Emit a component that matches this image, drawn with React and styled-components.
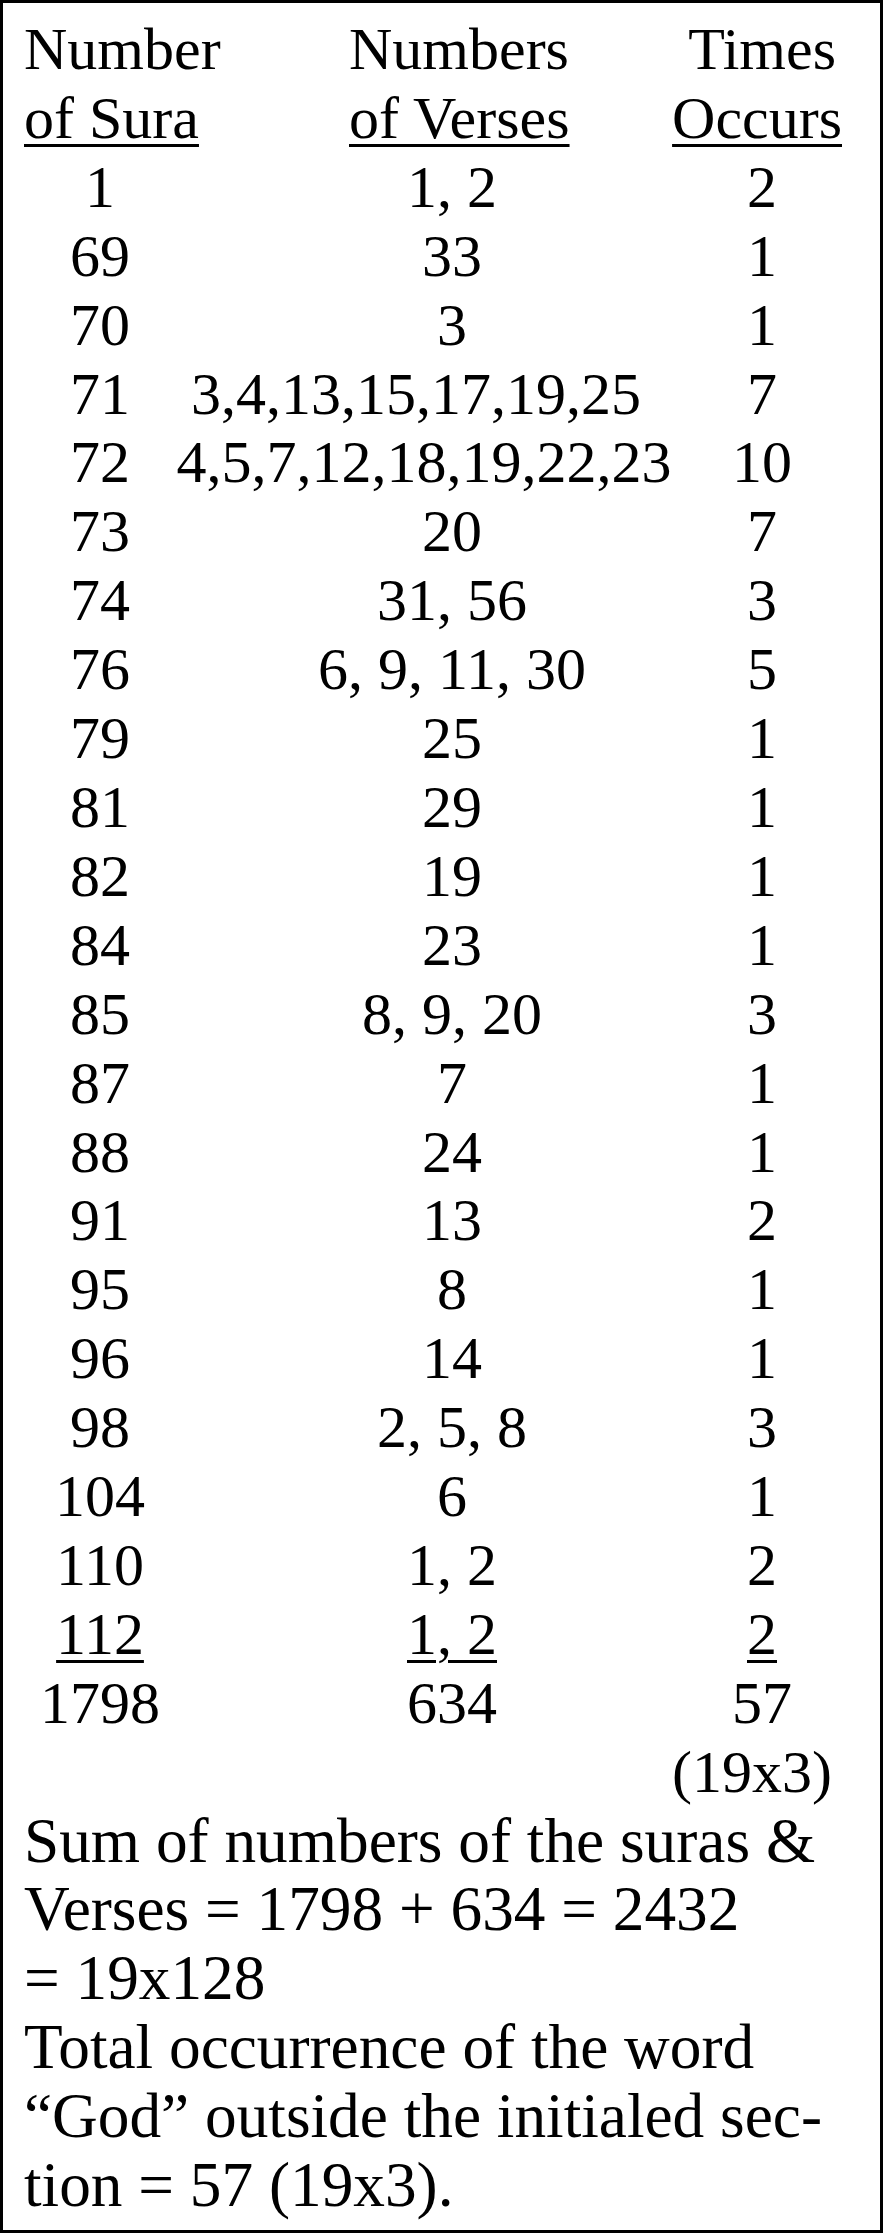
import React from "react";
import styled, { createGlobalStyle } from "styled-components";

const Global = createGlobalStyle`
  html, body { margin: 0; padding: 0; background: #fff; }
  body { font-family: "Liberation Serif", "Times New Roman", serif; color: #000; }
`;

const Frame = styled.div`
  box-sizing: border-box;
  width: 883px;
  height: 2233px;
  border: 3px solid #000;
  padding: 12px 0 0 21px;
  background: #fff;
  font-family: "Liberation Serif", "Times New Roman", serif;
  font-size: 60px;
  line-height: 68.9px;
  color: #000;
  overflow: hidden;
`;

const HeaderRow = styled.div`
  display: grid;
  grid-template-columns: 325px 323px 170px;
  white-space: nowrap;
`;

const HeadCell = styled.div`
  display: flex;
  flex-direction: column;
  align-items: ${(p) => (p.$align === "right" ? "flex-end" : "flex-start")};
`;

const HeadLine = styled.span`
  margin-right: ${(p) => p.$inset || 0}px;
`;

const Under = styled.span`
  text-decoration: underline;
  text-decoration-thickness: 3px;
  text-underline-offset: 6px;
`;

const DataRow = styled.div`
  display: grid;
  grid-template-columns: 152px 496px 180px;
  white-space: nowrap;
`;

const SuraCell = styled.div`
  text-align: center;
`;

const VerseCell = styled.div`
  text-align: center;
  padding-left: ${(p) => (p.$wide ? 0 : 56)}px;
  padding-right: ${(p) => p.$pr || 0}px;
`;

const TimesCell = styled.div`
  text-align: ${(p) => (p.$align === "right" ? "right" : "center")};
  padding-right: ${(p) => (p.$align === "right" ? 21 : 0)}px;
`;

const Note = styled.p`
  margin: 0;
  font-size: 63.3px;
  line-height: 68.9px;
  white-space: nowrap;
`;

const rows = [
  ["1", "1, 2", "2"],
  ["69", "33", "1"],
  ["70", "3", "1"],
  ["71", "3,4,13,15,17,19,25", "7", { wide: true, pr: 16 }],
  ["72", "4,5,7,12,18,19,22,23", "10", { wide: true }],
  ["73", "20", "7"],
  ["74", "31, 56", "3"],
  ["76", "6, 9, 11, 30", "5"],
  ["79", "25", "1"],
  ["81", "29", "1"],
  ["82", "19", "1"],
  ["84", "23", "1"],
  ["85", "8, 9, 20", "3"],
  ["87", "7", "1"],
  ["88", "24", "1"],
  ["91", "13", "2"],
  ["95", "8", "1"],
  ["96", "14", "1"],
  ["98", "2, 5, 8", "3"],
  ["104", "6", "1"],
  ["110", "1, 2", "2"],
  ["112", "1, 2", "2", { underline: true }],
  ["1798", "634", "57"],
];

function Maybe({ on, children }) {
  return on ? <Under>{children}</Under> : children;
}

export default function App() {
  return (
    <>
      <Global />
      <Frame>
        <HeaderRow>
          <HeadCell>
            <HeadLine>Number</HeadLine>
            <Under>of Sura</Under>
          </HeadCell>
          <HeadCell>
            <HeadLine>Numbers</HeadLine>
            <Under>of Verses</Under>
          </HeadCell>
          <HeadCell $align="right">
            <HeadLine $inset={6}>Times</HeadLine>
            <Under>Occurs</Under>
          </HeadCell>
        </HeaderRow>
        {rows.map(([sura, verses, times, opt = {}]) => (
          <DataRow key={sura}>
            <SuraCell>
              <Maybe on={opt.underline}>{sura}</Maybe>
            </SuraCell>
            <VerseCell $wide={opt.wide} $pr={opt.pr}>
              <Maybe on={opt.underline}>{verses}</Maybe>
            </VerseCell>
            <TimesCell>
              <Maybe on={opt.underline}>{times}</Maybe>
            </TimesCell>
          </DataRow>
        ))}
        <DataRow>
          <SuraCell />
          <VerseCell />
          <TimesCell $align="right">(19x3)</TimesCell>
        </DataRow>
        <Note>
          Sum of numbers of the suras &amp;
          <br />
          Verses = 1798 + 634 = 2432
          <br />= 19x128
        </Note>
        <Note>
          Total occurrence of the word
          <br />
          “God” outside the initialed sec-
          <br />
          tion = 57 (19x3).
        </Note>
      </Frame>
    </>
  );
}
